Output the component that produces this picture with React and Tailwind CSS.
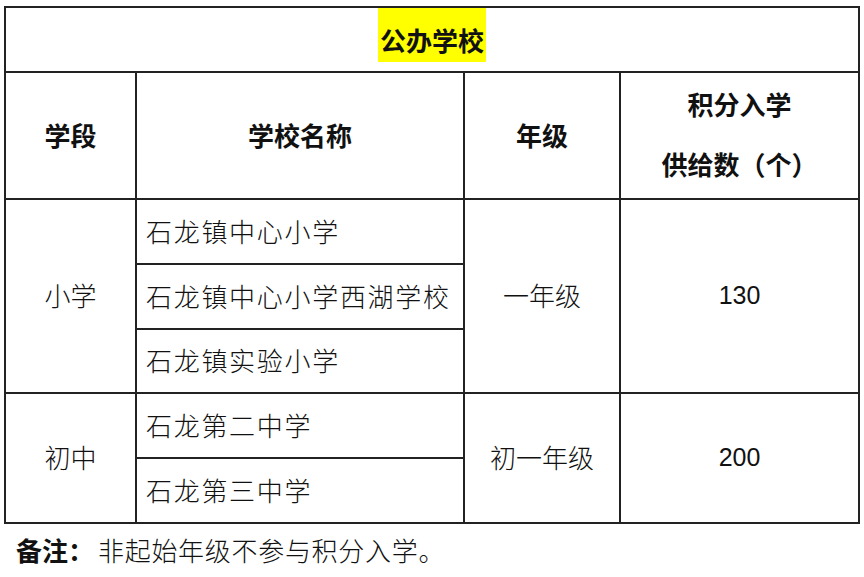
const cjk = { fontFamily: '"Noto Sans CJK SC", "Noto Sans", sans-serif' };
const num = { fontFamily: '"Liberation Sans", Arial, sans-serif' };

const cell = "border-2 border-[#222] text-[#111]";
const name = `${cell} pl-[9px] pb-[3px] tracking-[1.7px] font-light whitespace-nowrap`;

export default function App() {
    return (
        <div className="w-[864px] h-[577px] bg-white pt-[6px] pl-[4px]" style={cjk}>
            <table className="border-collapse table-fixed w-[854px]">
                <colgroup>
                    <col className="w-[131px]" />
                    <col className="w-[328px]" />
                    <col className="w-[156px]" />
                    <col className="w-[239px]" />
                </colgroup>
                <tbody>
                    {/* 标题 */}
                    <tr className="h-[65px]">
                        <td colSpan={4} className={`${cell} text-center align-top`}>
                            <span className="inline-block bg-[#ffff00] px-[2px] h-[54px] leading-[64px] text-[26px] font-bold">
                                公办学校
                            </span>
                        </td>
                    </tr>

                    {/* 表头 */}
                    <tr className="h-[127px] text-[26px] font-bold">
                        <td className={`${cell} text-center pb-[3px]`}>学段</td>
                        <td className={`${cell} text-center pb-[3px]`}>学校名称</td>
                        <td className={`${cell} text-center pb-[3px]`}>年级</td>
                        <td className={`${cell} text-center leading-[60px] pb-[3px]`}>
                            积分入学
                            <br />
                            供给数（个）
                        </td>
                    </tr>

                    {/* 小学 */}
                    <tr className="h-[65px] text-[26px]">
                        <td rowSpan={3} className={`${cell} text-center font-light pb-[3px]`}>小学</td>
                        <td className={name}>石龙镇中心小学</td>
                        <td rowSpan={3} className={`${cell} text-center font-light pb-[3px]`}>一年级</td>
                        <td rowSpan={3} className={`${cell} text-center text-[25px]`} style={num}>
                            130
                        </td>
                    </tr>
                    <tr className="h-[65px] text-[26px]">
                        <td className={name}>石龙镇中心小学西湖学校</td>
                    </tr>
                    <tr className="h-[64px] text-[26px]">
                        <td className={name}>石龙镇实验小学</td>
                    </tr>

                    {/* 初中 */}
                    <tr className="h-[65px] text-[26px]">
                        <td rowSpan={2} className={`${cell} text-center font-light pb-[3px]`}>初中</td>
                        <td className={name}>石龙第二中学</td>
                        <td rowSpan={2} className={`${cell} text-center font-light pb-[3px]`}>初一年级</td>
                        <td rowSpan={2} className={`${cell} text-center text-[25px]`} style={num}>
                            200
                        </td>
                    </tr>
                    <tr className="h-[65px] text-[26px]">
                        <td className={name}>石龙第三中学</td>
                    </tr>
                </tbody>
            </table>

            {/* 备注 */}
            <p className="mt-[8px] pl-[12px] text-[26px] leading-[36px] text-[#111]">
                <span className="font-bold">备注：</span>
                <span className="ml-[4px] font-light tracking-[0.7px]">非起始年级不参与积分入学。</span>
            </p>
        </div>
    );
}
